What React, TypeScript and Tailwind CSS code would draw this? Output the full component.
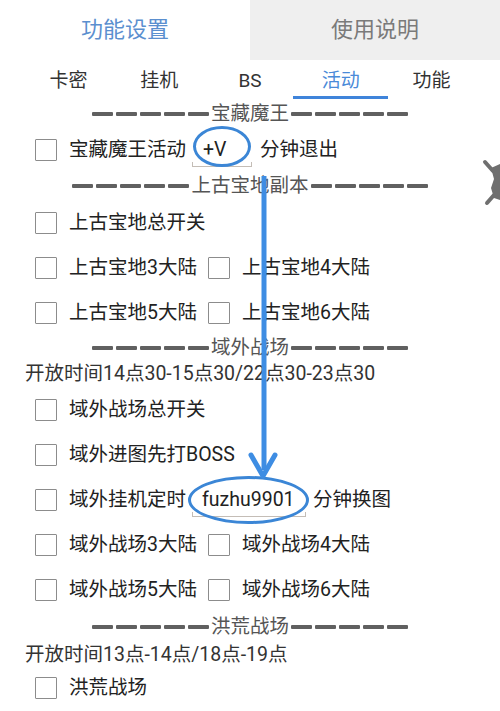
import React from "react";

const subTabs = ["卡密", "挂机", "BS", "活动", "功能"];

function Box() {
  return <span className="inline-block h-[22px] w-[22px] shrink-0 rounded-[1px] border-[1.5px] border-[#8c8c8c]" />;
}

function Check({ label }: { label: string }) {
  return (
    <span className="flex items-center">
      <Box />
      <span className="ml-[12px] whitespace-nowrap">{label}</span>
    </span>
  );
}

function Row({ children, h = "h-[45px]" }: { children: React.ReactNode; h?: string }) {
  return <div className={`flex items-center pl-[35px] ${h}`}>{children}</div>;
}

function Pair({ a, b }: { a: string; b: string }) {
  return (
    <Row>
      <span className="w-[173px]">
        <Check label={a} />
      </span>
      <Check label={b} />
    </Row>
  );
}

// the dash runs either side of a section title
function Dashes() {
  return (
    <span className="flex gap-[3px]" aria-hidden>
      {[0, 1, 2, 3, 4].map((i) => (
        <span key={i} className="h-[3.5px] w-[21px] rounded-[1px] bg-[#606060]" />
      ))}
    </span>
  );
}

function Header({ title, h }: { title: string; h: string }) {
  return (
    <div className={`flex items-center justify-center whitespace-nowrap text-[#555] ${h}`}>
      <Dashes />
      <span className="px-[2px]">{title}</span>
      <Dashes />
    </div>
  );
}

function Field({ value, w, pl, ellipse }: { value: string; w: string; pl: string; ellipse: string }) {
  return (
    <span className={`relative inline-flex h-[34px] items-center ${w} ${pl}`}>
      {value}
      <span className="absolute inset-x-0 bottom-0 h-[5px] border-x border-b border-[#c4bdb6]" />
      <span className={`absolute rounded-[50%] border-[3px] border-[#3b86d6] ${ellipse}`} />
    </span>
  );
}

export default function App() {
  return (
    <div className="relative h-[711px] w-[500px] overflow-hidden bg-white font-['Roboto','Noto_Sans_CJK_SC',sans-serif] text-[19.5px] leading-none text-[#222]">
      {/* top tabs */}
      <div className="flex h-[60px] text-[22px]">
        <div className="flex flex-1 items-center justify-center text-[#5b8fcf]">功能设置</div>
        <div className="flex flex-1 items-center justify-center bg-[#efefef] text-[#7a7a7a]">使用说明</div>
      </div>

      {/* sub tabs */}
      <div className="flex h-[40px] px-[23px] text-[19px]">
        {subTabs.map((t) => (
          <div
            key={t}
            className={`relative flex flex-1 items-center justify-center ${t === "活动" ? "text-[#4a8ad8]" : "text-[#333]"}`}
          >
            {t}
            {t === "活动" && <span className="absolute inset-x-[-2px] bottom-[1px] h-[3px] bg-[#3f84da]" />}
          </div>
        ))}
      </div>

      <Header title="宝藏魔王" h="h-[28px]" />
      <Row h="h-[44px]">
        <Box />
        <span className="ml-[12px]">宝藏魔王活动</span>
        <span className="ml-[6px]">
          <Field value="+V" w="w-[60px]" pl="pl-[11px]" ellipse="left-[1px] right-[1px] -top-[7px] bottom-0" />
        </span>
        <span className="ml-[8px]">分钟退出</span>
      </Row>

      <Header title="上古宝地副本" h="h-[28px]" />
      <Row>
        <Check label="上古宝地总开关" />
      </Row>
      <Pair a="上古宝地3大陆" b="上古宝地4大陆" />
      <Pair a="上古宝地5大陆" b="上古宝地6大陆" />

      <Header title="域外战场" h="h-[26px]" />
      <div className="flex h-[26px] items-center pl-[25px] text-[#333]">开放时间14点30-15点30/22点30-23点30</div>
      <Row>
        <Check label="域外战场总开关" />
      </Row>
      <Row>
        <Check label="域外进图先打BOSS" />
      </Row>
      <Row>
        <Box />
        <span className="ml-[12px]">域外挂机定时</span>
        <span className="ml-[6px]">
          <Field value="fuzhu9901" w="w-[114px]" pl="pl-[10px]" ellipse="-left-[4px] -right-[3px] -top-[7px] -bottom-[7px]" />
        </span>
        <span className="ml-[7px]">分钟换图</span>
      </Row>
      <Pair a="域外战场3大陆" b="域外战场4大陆" />
      <Pair a="域外战场5大陆" b="域外战场6大陆" />

      <Header title="洪荒战场" h="h-[30px]" />
      <div className="flex h-[26px] items-center pl-[25px] text-[#333]">开放时间13点-14点/18点-19点</div>
      <Row h="h-[40px]">
        <Check label="洪荒战场" />
      </Row>

      {/* annotation arrow */}
      <svg className="pointer-events-none absolute inset-0" width="500" height="711" viewBox="0 0 500 711">
        <line x1="264" y1="176" x2="264" y2="470" stroke="#3e8de3" strokeWidth="5" />
        <polyline
          points="251,455 263,476 275,455"
          fill="none"
          stroke="#3e8de3"
          strokeWidth="5"
          strokeLinecap="round"
          strokeLinejoin="round"
        />
      </svg>

      {/* floating button, cut off at the edge */}
      <svg className="absolute right-0 top-[158px]" width="18" height="50" viewBox="0 0 18 50">
        <path d="M3 4 L11 13" stroke="#6f6f6f" strokeWidth="4" strokeLinecap="round" />
        <path d="M5 45 L12 37" stroke="#6f6f6f" strokeWidth="4" strokeLinecap="round" />
        <path d="M9 10 L18 6 L18 42 L12 40 L9 30 L12 21 Z" fill="#6f6f6f" />
      </svg>
    </div>
  );
}
